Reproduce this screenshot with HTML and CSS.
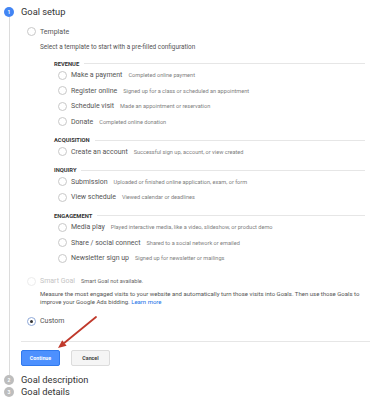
FILE: index.html
```html
<!DOCTYPE html>
<html lang="en">
<head>
  <meta charset="UTF-8">
  <title>Goal setup</title>
  <link rel="stylesheet" href="styles.css">
</head>
<body>
  <div class="stepper">
    <div class="step">
      <div class="step-head">
        <span class="step-num active">1</span>
        <span class="step-title">Goal setup</span>
      </div>
      <div class="step-body">
        <div class="option">
          <span class="radio"></span>
          <span class="option-label">Template</span>
        </div>
        <p class="hint">Select a template to start with a pre-filled configuration</p>

        <div class="group">
          <div class="group-title"><span>REVENUE</span></div>
          <div class="row"><span class="radio"></span><span class="row-label">Make a payment</span><span class="row-desc">Completed online payment</span></div>
          <div class="row"><span class="radio"></span><span class="row-label">Register online</span><span class="row-desc">Signed up for a class or scheduled an appointment</span></div>
          <div class="row"><span class="radio"></span><span class="row-label">Schedule visit</span><span class="row-desc">Made an appointment or reservation</span></div>
          <div class="row"><span class="radio"></span><span class="row-label">Donate</span><span class="row-desc">Completed online donation</span></div>
        </div>

        <div class="group">
          <div class="group-title"><span>ACQUISITION</span></div>
          <div class="row"><span class="radio"></span><span class="row-label">Create an account</span><span class="row-desc">Successful sign up, account, or view created</span></div>
        </div>

        <div class="group">
          <div class="group-title"><span>INQUIRY</span></div>
          <div class="row"><span class="radio"></span><span class="row-label">Submission</span><span class="row-desc">Uploaded or finished online application, exam, or form</span></div>
          <div class="row"><span class="radio"></span><span class="row-label">View schedule</span><span class="row-desc">Viewed calendar or deadlines</span></div>
        </div>

        <div class="group">
          <div class="group-title"><span>ENGAGEMENT</span></div>
          <div class="row"><span class="radio"></span><span class="row-label">Media play</span><span class="row-desc">Played interactive media, like a video, slideshow, or product demo</span></div>
          <div class="row"><span class="radio"></span><span class="row-label">Share / social connect</span><span class="row-desc">Shared to a social network or emailed</span></div>
          <div class="row"><span class="radio"></span><span class="row-label">Newsletter sign up</span><span class="row-desc">Signed up for newsletter or mailings</span></div>
        </div>

        <div class="option smart">
          <span class="radio disabled"></span>
          <span class="option-label muted">Smart Goal</span>
          <span class="row-desc">Smart Goal not available.</span>
        </div>
        <div class="smart-desc">
          <div>Measure the most engaged visits to your website and automatically turn those visits into Goals. Then use those Goals to</div>
          <div>improve your Google Ads bidding. <a href="#">Learn more</a></div>
        </div>

        <div class="option custom">
          <span class="radio checked"></span>
          <span class="option-label">Custom</span>
        </div>

        <div class="actions">
          <button class="btn primary">Continue</button>
          <button class="btn">Cancel</button>
        </div>
      </div>
    </div>

    <div class="step-head">
      <span class="step-num">2</span>
      <span class="step-title">Goal description</span>
    </div>
    <div class="step-head last">
      <span class="step-num">3</span>
      <span class="step-title">Goal details</span>
    </div>
  </div>

  <!-- annotation arrow -->
  <svg class="arrow" width="370" height="400" viewBox="0 0 370 400">
    <line x1="96" y1="317" x2="64.5" y2="342.7" stroke="#c0392b" stroke-width="1.8" stroke-linecap="round"/>
    <polygon points="58,348 66.6,345.8 62.2,340.2" fill="#c0392b"/>
  </svg>
</body>
</html>
```

FILE: styles.css
```css
body {
  margin: 0;
  font-family: Roboto, "Noto Sans", Arial, sans-serif;
  color: #333;
  background: #fff;
  position: relative;
}

.stepper {
  padding-top: 7px;
}

.step-head {
  display: flex;
  align-items: center;
  height: 10px;
  padding-left: 4px;
}

.step-head.last {
  margin-top: 2px;
}

.step-num {
  width: 10px;
  height: 10px;
  border-radius: 50%;
  background: #bdbdbd;
  color: #fff;
  font-size: 5px;
  font-weight: bold;
  line-height: 10px;
  text-align: center;
  margin-right: 7px;
}

.step-num.active {
  background: #4285f4;
}

.step-title {
  font-size: 9.3px;
  color: #333;
  line-height: 10px;
}

.step-body {
  margin-left: 9px;
  border-left: 1px solid #dcdcdc;
  padding: 9px 0 9px 11px;
}

.option {
  display: flex;
  align-items: center;
  height: 11px;
  padding-left: 6px;
}

.radio {
  flex: none;
  box-sizing: border-box;
  width: 9px;
  height: 9px;
  border: 1px solid #c8c8c8;
  border-radius: 50%;
  background: #fff;
  margin-right: 4px;
  position: relative;
}

.radio.disabled {
  border-color: #ececec;
}

.radio.checked {
  border-color: #8fa9d8;
}

.radio.checked::after {
  content: "";
  position: absolute;
  left: 2px;
  top: 2px;
  width: 3px;
  height: 3px;
  border-radius: 50%;
  background: #333;
}

.option-label {
  font-size: 7px;
  color: #555;
}

.option-label.muted {
  color: #c4c4c4;
  margin-right: 6px;
}

.hint {
  margin: 6px 0 8.5px;
  padding-left: 19px;
  font-size: 6.4px;
  line-height: 8px;
  color: #555;
}

.group {
  margin-right: 5px;
}

.group + .group {
  margin-top: 6.5px;
}

.group-title {
  display: flex;
  align-items: center;
  height: 8px;
  padding-left: 33px;
  font-size: 5.8px;
  font-weight: bold;
  color: #333;
}

.group-title::after {
  content: "";
  flex: 1;
  height: 1px;
  background: #e6e6e6;
  margin-left: 5px;
}

.row {
  display: flex;
  align-items: center;
  height: 15.5px;
  padding-left: 37px;
}

.row-label {
  font-size: 7px;
  color: #555;
}

.row-desc {
  margin-left: 6px;
  font-size: 5.6px;
  color: #808080;
}

.smart {
  margin-top: 9.5px;
}

.smart .row-desc {
  margin-left: 0;
  color: #666;
}

.smart-desc {
  margin: 3px 5px 0 0;
  padding-left: 19px;
  font-size: 6px;
  line-height: 8.5px;
  color: #555;
  white-space: nowrap;
}

.smart-desc a {
  color: #1a73e8;
  text-decoration: none;
}

.custom {
  margin-top: 9px;
}

.actions {
  display: flex;
  gap: 11px;
  margin-top: 14.5px;
  border-top: 1px solid #e6e6e6;
  padding-top: 8px;
}

.btn {
  width: 39px;
  height: 16px;
  padding: 0;
  border: 1px solid #dcdcdc;
  border-radius: 2px;
  background: #f5f5f5;
  color: #444;
  font-family: inherit;
  font-size: 5.3px;
  font-weight: bold;
}

.btn.primary {
  background: #4d90fe;
  border-color: #3079ed;
  color: #fff;
}

.arrow {
  position: absolute;
  left: 0;
  top: 0;
  pointer-events: none;
}
```
